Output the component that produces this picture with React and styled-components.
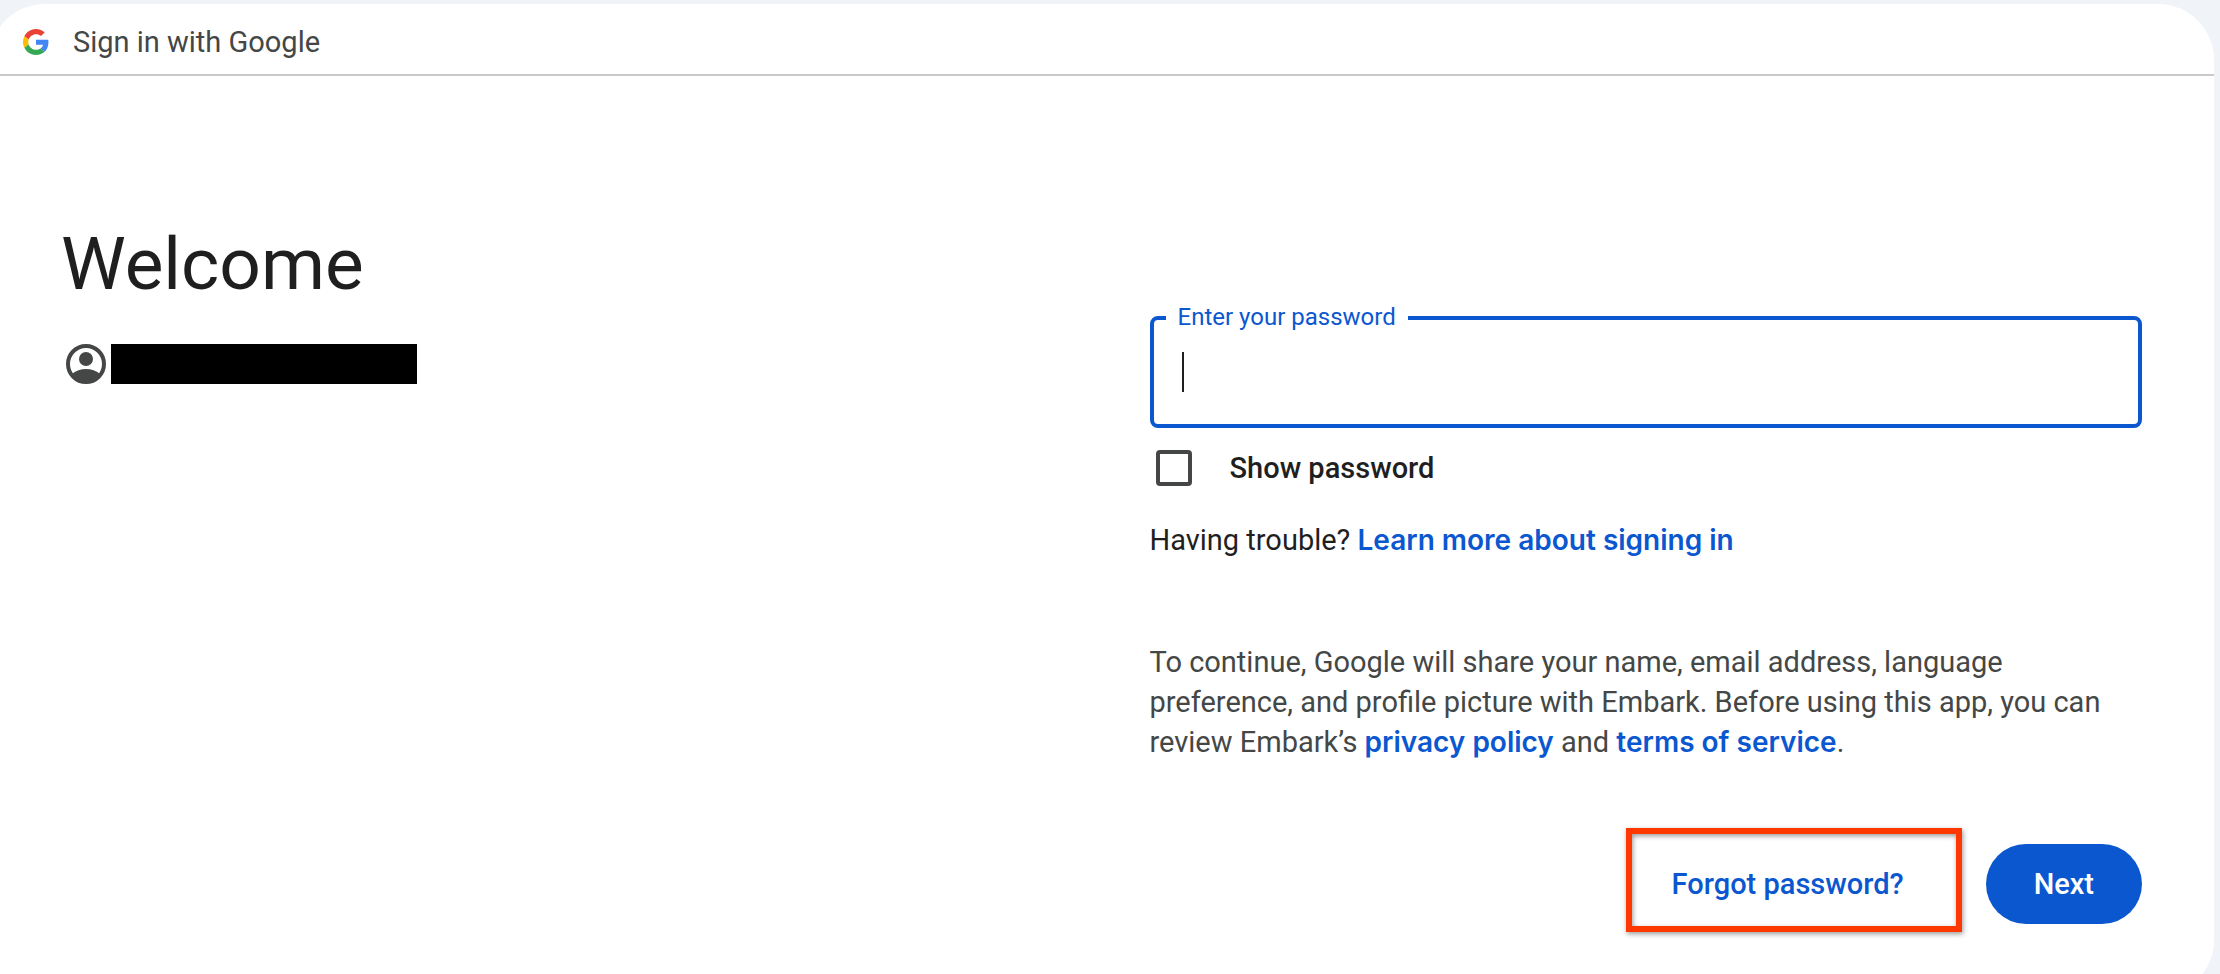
import { useState } from "react";
import styled, { createGlobalStyle } from "styled-components";

const GlobalStyle = createGlobalStyle`
    *, *::before, *::after{
        box-sizing: border-box;
    }
    body{
        margin: 0;
        background-color: #f0f4f9;
        color: #1f1f1f;
        font-family: Roboto, "Liberation Sans", sans-serif;
        font-size: 29px;
        line-height: 40px;
    }
    button, input{
        font: inherit;
    }
    h1, p{
        margin: 0;
    }
`;

const Page = styled.div`
    height: 100vh;
    overflow: hidden;
    padding-top: 4px;
`;

const Card = styled.div`
    margin: 0 6px 0 -11px;
    background-color: #fff;
    border-radius: 56px;
    overflow: hidden;
`;

const Header = styled.header`
    display: flex;
    align-items: center;
    gap: 24px;
    height: 72px;
    padding: 5px 32px 0 34px;
    border-bottom: 2px solid #c9c9c9;
    color: #444746;
    svg{
        width: 26px;
        height: 26px;
    }
`;

const Content = styled.main`
    display: grid;
    grid-template-columns: 1fr 1fr;
    column-gap: 96px;
    padding: 144px 72px 72px;
    @media screen and (max-width: 1200px){
        grid-template-columns: 1fr;
    }
`;

const Title = styled.h1`
    margin-bottom: 32px;
    font-size: 73px;
    font-weight: 400;
    line-height: 88px;
`;

const Account = styled.div`
    display: flex;
    align-items: center;
    height: 48px;
    padding-left: 5px;
    gap: 5px;
    svg{
        width: 40px;
        height: 40px;
    }
`;

const Redacted = styled.span`
    width: 306px;
    height: 40px;
    background-color: #000;
`;

const Form = styled.form`
    padding-top: 96px;
`;

const Field = styled.div`
    position: relative;
    label{
        position: absolute;
        top: -13px;
        left: 16px;
        padding: 0 12px;
        background-color: #fff;
        color: #0b57d0;
        font-size: 24px;
        line-height: 28px;
    }
    input{
        display: block;
        width: 100%;
        height: 112px;
        padding: 0 28px;
        border: 4px solid #0b57d0;
        border-radius: 8px;
        outline: none;
        background-color: #fff;
        color: #1f1f1f;
    }
`;

const Caret = styled.span`
    position: absolute;
    top: 36px;
    left: 32px;
    width: 2px;
    height: 40px;
    background-color: #1f1f1f;
`;

const ShowPassword = styled.div`
    display: flex;
    align-items: center;
    gap: 38px;
    height: 48px;
    margin: 16px 0 28px;
    padding-left: 6px;
    font-weight: 500;
    input{
        appearance: none;
        width: 36px;
        height: 36px;
        margin: 0;
        border: 4px solid #444746;
        border-radius: 4px;
        &:checked{
            background-color: #0b57d0;
            border-color: #0b57d0;
        }
    }
`;

const TextLink = styled.a`
    color: #0b57d0;
    font-family: Inter, Roboto, sans-serif;
    font-size: 28px;
    font-weight: 600;
    text-decoration: none;
`;

const Notice = styled.p`
    margin: 82px 0;
    color: #444746;
`;

const Actions = styled.div`
    display: flex;
    justify-content: flex-end;
    gap: 42px;
`;

const Button = styled.button`
    height: 80px;
    padding: 0 48px;
    border: none;
    border-radius: 40px;
    background-color: #0b57d0;
    color: #fff;
    font-weight: 500;
    cursor: pointer;
`;

const TextButton = styled(Button)`
    position: relative;
    padding: 0 40px;
    background-color: transparent;
    color: #0b57d0;
`;

const Highlight = styled.span`
    position: absolute;
    top: -16px;
    right: -18px;
    bottom: -8px;
    left: -6px;
    border: 6px solid #ff3700;
    box-shadow: 1px 2px 5px rgba(0, 0, 0, .4), inset 1px 2px 5px rgba(0, 0, 0, .4);
    pointer-events: none;
`;

const GoogleLogo = () => (
    <svg viewBox="0 0 48 48" aria-hidden="true">
        <path fill="#EA4335" d="M24 9.5c3.54 0 6.71 1.22 9.21 3.6l6.85-6.85C35.9 2.38 30.47 0 24 0 14.62 0 6.51 5.38 2.56 13.22l7.98 6.19C12.43 13.72 17.74 9.5 24 9.5z" />
        <path fill="#4285F4" d="M46.98 24.55c0-1.57-.15-3.09-.38-4.55H24v9.02h12.94c-.58 2.96-2.26 5.48-4.78 7.18l7.73 6c4.51-4.18 7.09-10.36 7.09-17.65z" />
        <path fill="#FBBC05" d="M10.53 28.59c-.48-1.45-.76-2.99-.76-4.59s.27-3.14.76-4.59l-7.98-6.19C.92 16.46 0 20.12 0 24c0 3.88.92 7.54 2.56 10.78l7.97-6.19z" />
        <path fill="#34A853" d="M24 48c6.48 0 11.93-2.13 15.89-5.81l-7.73-6c-2.15 1.45-4.92 2.3-8.16 2.3-6.26 0-11.57-4.22-13.47-9.91l-7.98 6.19C6.51 42.62 14.62 48 24 48z" />
    </svg>
);

const AccountIcon = () => (
    <svg viewBox="0 0 40 40" fill="#444746" aria-hidden="true">
        <circle cx="20" cy="20" r="18" fill="none" stroke="#444746" strokeWidth="4" />
        <circle cx="20" cy="15" r="7" />
        <path d="M6 30Q12 25 20 25T34 30Q28 38 20 38T6 30z" />
    </svg>
);

const App = () => {
    const [password, setPassword] = useState("");
    const [visible, setVisible] = useState(false);

    return(
        <Page>
            <GlobalStyle />
            <Card>
                <Header>
                    <GoogleLogo />
                    <span>Sign in with Google</span>
                </Header>
                <Content>
                    <div>
                        <Title>Welcome</Title>
                        <Account>
                            <AccountIcon />
                            <Redacted />
                        </Account>
                    </div>
                    <Form onSubmit={e => e.preventDefault()}>
                        <Field>
                            <input
                                id="password"
                                type={visible ? "text" : "password"}
                                value={password}
                                onChange={e => setPassword(e.target.value)}
                            />
                            <label htmlFor="password">Enter your password</label>
                            {!password && <Caret />}
                        </Field>
                        <ShowPassword>
                            <input id="show" type="checkbox" checked={visible} onChange={e => setVisible(e.target.checked)} />
                            <label htmlFor="show">Show password</label>
                        </ShowPassword>
                        <p>Having trouble? <TextLink href="#help">Learn more about signing in</TextLink></p>
                        <Notice>
                            To continue, Google will share your name, email address, language preference, and profile picture with Embark. Before using this app, you can review Embark’s <TextLink href="#privacy">privacy policy</TextLink> and <TextLink href="#terms">terms of service</TextLink>.
                        </Notice>
                        <Actions>
                            <TextButton type="button">Forgot password?<Highlight /></TextButton>
                            <Button type="submit">Next</Button>
                        </Actions>
                    </Form>
                </Content>
            </Card>
        </Page>
    );
}

export default App;
